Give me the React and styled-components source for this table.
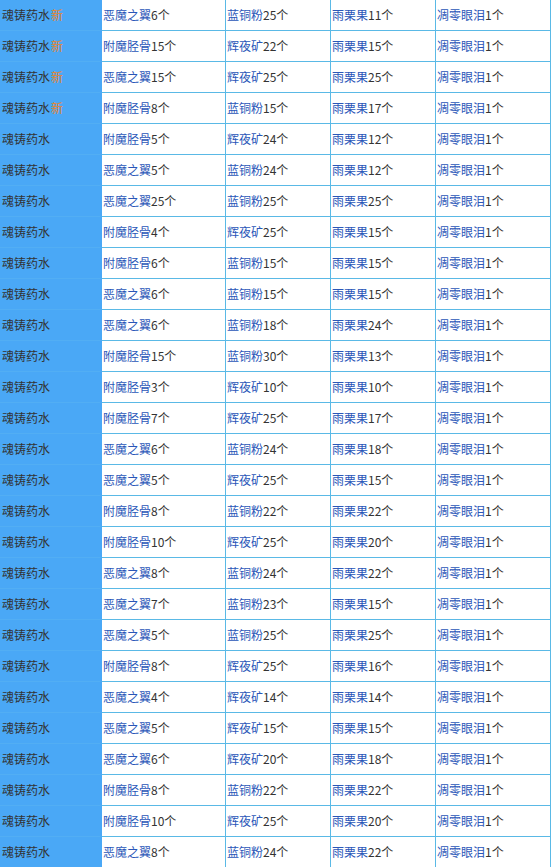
import React from 'react';
import styled, { createGlobalStyle } from 'styled-components';

const GlobalStyle = createGlobalStyle`
    html, body {
        margin: 0;
        padding: 0;
        background: #fff;
        overflow: hidden;
    }
    body {
        font-family: "Noto Sans CJK SC", "Noto Sans", sans-serif;
    }
`;

// each row: [recipe column, new?, ingredients...]
const rows = [
    [true, ['恶魔之翼', 6], ['蓝铜粉', 25], ['雨栗果', 11]],
    [true, ['附魔胫骨', 15], ['辉夜矿', 22], ['雨栗果', 15]],
    [true, ['恶魔之翼', 15], ['辉夜矿', 25], ['雨栗果', 25]],
    [true, ['附魔胫骨', 8], ['蓝铜粉', 15], ['雨栗果', 17]],
    [false, ['附魔胫骨', 5], ['辉夜矿', 24], ['雨栗果', 12]],
    [false, ['恶魔之翼', 5], ['蓝铜粉', 24], ['雨栗果', 12]],
    [false, ['恶魔之翼', 25], ['蓝铜粉', 25], ['雨栗果', 25]],
    [false, ['附魔胫骨', 4], ['辉夜矿', 25], ['雨栗果', 15]],
    [false, ['附魔胫骨', 6], ['蓝铜粉', 15], ['雨栗果', 15]],
    [false, ['恶魔之翼', 6], ['蓝铜粉', 15], ['雨栗果', 15]],
    [false, ['恶魔之翼', 6], ['蓝铜粉', 18], ['雨栗果', 24]],
    [false, ['附魔胫骨', 15], ['蓝铜粉', 30], ['雨栗果', 13]],
    [false, ['附魔胫骨', 3], ['辉夜矿', 10], ['雨栗果', 10]],
    [false, ['附魔胫骨', 7], ['辉夜矿', 25], ['雨栗果', 17]],
    [false, ['恶魔之翼', 6], ['蓝铜粉', 24], ['雨栗果', 18]],
    [false, ['恶魔之翼', 5], ['辉夜矿', 25], ['雨栗果', 15]],
    [false, ['附魔胫骨', 8], ['蓝铜粉', 22], ['雨栗果', 22]],
    [false, ['附魔胫骨', 10], ['辉夜矿', 25], ['雨栗果', 20]],
    [false, ['恶魔之翼', 8], ['蓝铜粉', 24], ['雨栗果', 22]],
    [false, ['恶魔之翼', 7], ['蓝铜粉', 23], ['雨栗果', 15]],
    [false, ['恶魔之翼', 5], ['蓝铜粉', 25], ['雨栗果', 25]],
    [false, ['附魔胫骨', 8], ['辉夜矿', 25], ['雨栗果', 16]],
    [false, ['恶魔之翼', 4], ['辉夜矿', 14], ['雨栗果', 14]],
    [false, ['恶魔之翼', 5], ['辉夜矿', 15], ['雨栗果', 15]],
    [false, ['恶魔之翼', 6], ['辉夜矿', 20], ['雨栗果', 18]],
    [false, ['附魔胫骨', 8], ['蓝铜粉', 22], ['雨栗果', 22]],
    [false, ['附魔胫骨', 10], ['辉夜矿', 25], ['雨栗果', 20]],
    [false, ['恶魔之翼', 8], ['蓝铜粉', 24], ['雨栗果', 22]],
];

const App = () => (
    <>
        <GlobalStyle />
        <Table>
            {rows.map(([isNew, a, b, c], i) => (
                <Row key={i}>
                    <NameCell>
                        魂铸药水{isNew && <NewTag>新</NewTag>}
                    </NameCell>
                    {[a, b, c, ['凋零眼泪', 1]].map(([item, count], j) => (
                        <Cell key={j}>
                            <Item>{item}</Item>
                            <Count>{count}个</Count>
                        </Cell>
                    ))}
                </Row>
            ))}
        </Table>
    </>
);

const Table = styled.div`
    width: 551px;
    display: flex;
    flex-direction: column;
`;

const Row = styled.div`
    display: grid;
    grid-template-columns: 102px 124px 105px 105px 115px;
    height: 31px;
`;

const Cell = styled.div`
    display: flex;
    align-items: center;
    padding: 0 0 1px 1px;
    border-right: 1px solid #5ab9e6;
    border-bottom: 1px solid #5ab9e6;
    font-size: 12px;
    white-space: nowrap;
    background: #fff;
`;

const NameCell = styled(Cell)`
    background: #4aa8f6;
    color: #333;
    padding-left: 2px;
    border-right-color: #4aa8f6;
    border-bottom-color: #52aef4;
`;

const NewTag = styled.span`
    color: #e8842c;
    margin-left: 1px;
`;

const Item = styled.span`
    color: #2a56b8;
`;

const Count = styled.span`
    color: #333;
`;

export default App;
